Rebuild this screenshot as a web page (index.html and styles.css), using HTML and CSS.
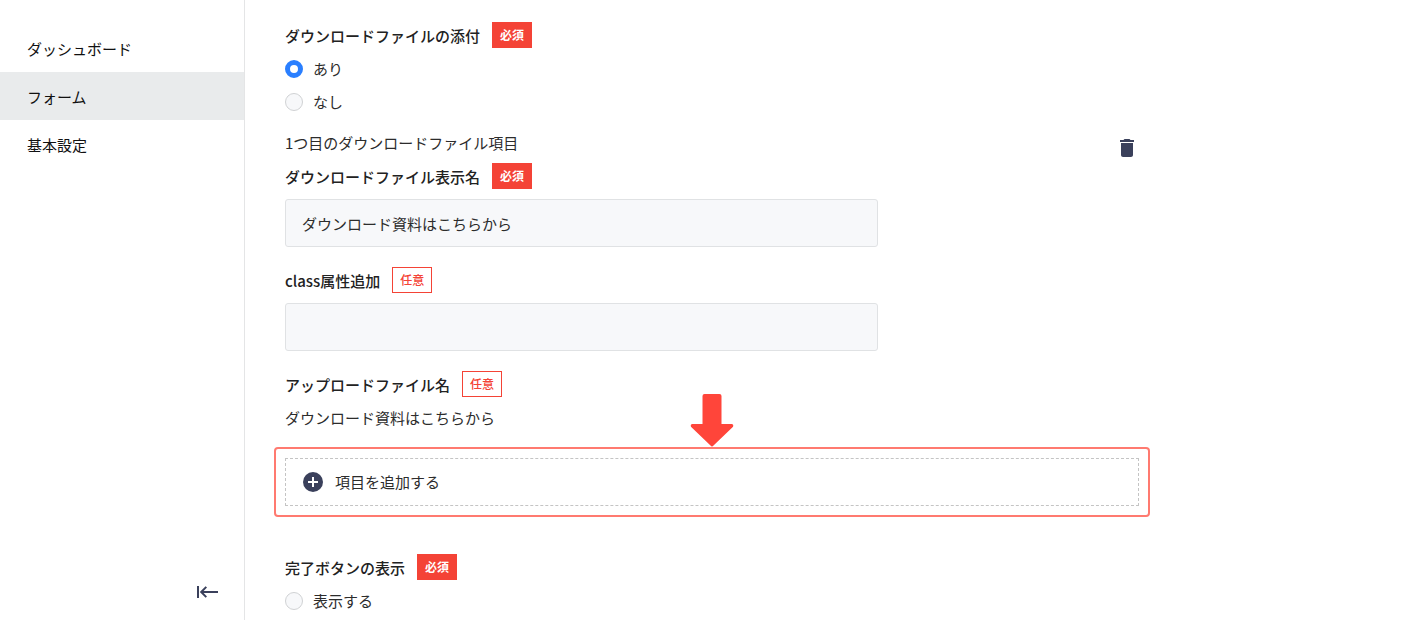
FILE: index.html
```
<!DOCTYPE html>
<html lang="ja">
<head>
    <meta charset="UTF-8" />
    <meta name="viewport" content="width=device-width, initial-scale=1" />
    <title>フォーム</title>
    <link rel="stylesheet" href="styles.css">
</head>
<body>
    <aside class="sidebar">
        <nav class="menu">
            <a class="menu-item" href="#">ダッシュボード</a>
            <a class="menu-item active" href="#">フォーム</a>
            <a class="menu-item" href="#">基本設定</a>
        </nav>
        <button class="icon-btn collapse-btn" type="button" aria-label="メニューを閉じる">
            <svg width="22" height="12" viewBox="0 0 22 12" fill="none" stroke="#3a405b" stroke-width="2">
                <path d="M1 0V12M21 6H4M9.300 .9L4.200 6l5.100 5.100" />
            </svg>
        </button>
    </aside>

    <main class="content">
        <form class="form">
            <fieldset class="group">
                <legend class="field-label">ダウンロードファイルの添付 <span class="badge required">必須</span></legend>
                <label class="radio"><input type="radio" name="attach" checked> あり</label>
                <label class="radio"><input type="radio" name="attach"> なし</label>
            </fieldset>

            <section class="file-item">
                <div class="file-head">
                    <p class="file-title">1つ目のダウンロードファイル項目</p>
                    <button class="icon-btn delete-btn" type="button" aria-label="削除">
                        <svg width="24" height="24" viewBox="0 0 24 24" fill="#3a405b">
                            <path d="M6 19c0 1.100.9 2 2 2h8c1.100 0 2-.9 2-2V7H6v12zM19 4h-3.500l-1-1h-5l-1 1H5v2h14V4z" />
                        </svg>
                    </button>
                </div>

                <div class="field">
                    <label class="field-label" for="displayName">ダウンロードファイル表示名 <span class="badge required">必須</span></label>
                    <input class="text-input" id="displayName" type="text" value="ダウンロード資料はこちらから">
                </div>

                <div class="field">
                    <label class="field-label" for="className">class属性追加 <span class="badge optional">任意</span></label>
                    <input class="text-input" id="className" type="text">
                </div>

                <div class="field">
                    <div class="field-label">アップロードファイル名 <span class="badge optional">任意</span></div>
                    <p class="file-name">ダウンロード資料はこちらから</p>
                </div>
            </section>

            <div class="highlight">
                <svg class="arrow" width="43" height="53" viewBox="0 0 43 53" fill="#ff453a">
                    <path d="M14 0H29Q31 0 31 2V30H41.500Q44 31 42.300 33L23 51.500Q21.500 53.500 20 51.500L.7 33Q-1 31 1.500 30H12V2Q12 0 14 0Z" />
                </svg>
                <button class="add-btn" type="button">
                    <svg width="20" height="20" viewBox="0 0 20 20">
                        <circle cx="10" cy="10" r="10" fill="#3a405b" />
                        <path d="M10 5V15M5 10H15" stroke="#fff" stroke-width="2" />
                    </svg>
                    項目を追加する
                </button>
            </div>

            <fieldset class="group">
                <legend class="field-label">完了ボタンの表示 <span class="badge required">必須</span></legend>
                <label class="radio"><input type="radio" name="finish"> 表示する</label>
            </fieldset>
        </form>
    </main>
</body>
</html>
```
FILE: styles.css
```
* {
    box-sizing: border-box;
}

body {
    display: flex;
    min-height: 100vh;
    margin: 0;
    background: #fff;
    color: #2c2c2c;
    font-family: "Noto Sans CJK JP", sans-serif;
    font-size: 15px;
    line-height: 24px;
}

p {
    margin: 0;
}

button,
input {
    font: inherit;
    color: inherit;
}

.icon-btn {
    display: flex;
    padding: 0;
    border: none;
    background: none;
    cursor: pointer;
}

/* sidebar */
.sidebar {
    display: flex;
    flex-direction: column;
    flex: 0 0 245px;
    padding: 24px 0 22px;
    border-right: 1px solid #e4e5e6;
}

.menu-item {
    display: block;
    padding: 13px 27px 11px;
    color: #111;
    text-decoration: none;
}

.menu-item.active {
    background: #e9ebec;
}

.collapse-btn {
    margin: auto 25px 0 auto;
}

/* form */
.content {
    flex: 1;
    padding: 22px 40px 0;
}

.form {
    max-width: 854px;
}

.group {
    margin: 0;
    padding: 0;
    border: none;
}

.field-label {
    display: flex;
    align-items: flex-end;
    gap: 12px;
    height: 26px;
    padding: 0;
    color: #222;
    font-weight: 500;
}

.badge {
    width: 40px;
    border: 1px solid #f44336;
    font-size: 12px;
    text-align: center;
}

.required {
    background: #f44336;
    color: #fff;
    font-weight: 700;
}

.optional {
    color: #f44336;
}

.radio {
    display: flex;
    align-items: center;
    gap: 10px;
    margin-top: 9px;
}

.radio input {
    appearance: none;
    width: 18px;
    height: 18px;
    margin: 0;
    border: 1px solid #d0d2d4;
    border-radius: 50%;
    background: #f7f8fa;
}

.radio input:checked {
    border: 5px solid #2a7fff;
    background: #fff;
}

.file-item {
    margin-top: 17px;
}

.file-head {
    display: flex;
    justify-content: space-between;
    align-items: flex-start;
    margin-bottom: 3px;
}

.delete-btn {
    margin-top: 5px;
}

.field + .field {
    margin-top: 20px;
}

.text-input {
    display: block;
    width: 100%;
    max-width: 593px;
    height: 48px;
    margin-top: 10px;
    padding: 0 16px;
    border: 1px solid #e0e2e4;
    border-radius: 3px;
    background: #f7f8fa;
}

.file-name {
    margin-top: 9px;
}

.highlight {
    position: relative;
    margin: 17px -11px 37px;
    padding: 9px;
    border: 2px solid #ff7a70;
    border-radius: 4px;
}

/* sits on top of the frame's border */
.arrow {
    position: absolute;
    bottom: calc(100% + 2px);
    left: 50%;
    transform: translateX(-50%);
}

.add-btn {
    display: flex;
    align-items: center;
    gap: 12px;
    width: 100%;
    height: 48px;
    padding: 0 17px;
    border: 1px dashed #c4c4c4;
    background: #fff;
    cursor: pointer;
}
```
